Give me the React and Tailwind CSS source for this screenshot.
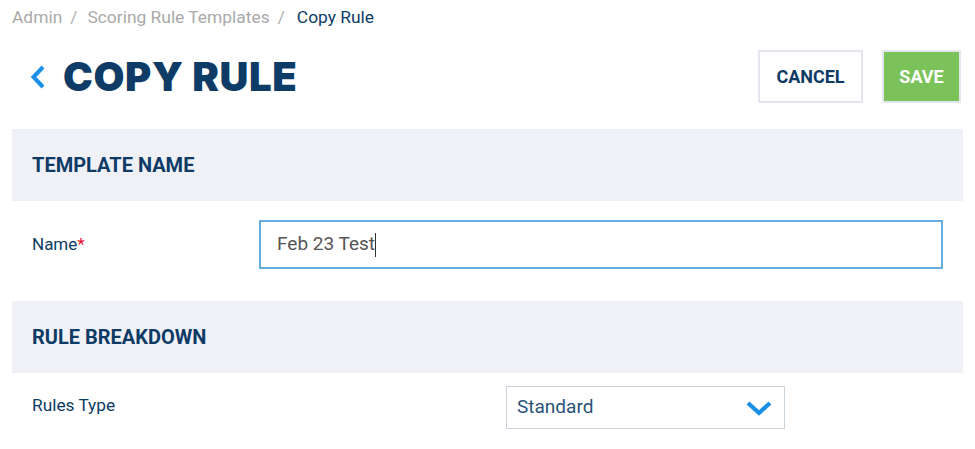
export default function App() {
  return (
    <div className="w-[975px] h-[449px] overflow-hidden bg-white px-3 font-['Roboto',sans-serif]">
      {/* breadcrumb */}
      <div className="h-[36px] flex items-center text-[17.4px] leading-none">
        <span className="text-[#a9a9a9]">Admin</span>
        <span className="text-[#b0b0b0] ml-[8px] mr-[10px]">/</span>
        <span className="text-[#a9a9a9]">Scoring Rule Templates</span>
        <span className="text-[#b0b0b0] ml-[8px] mr-[12px]">/</span>
        <span className="text-[#0d3b66]">Copy Rule</span>
      </div>

      {/* title row */}
      <div className="mt-[14px] h-[53px] flex items-center justify-between">
        <div className="flex items-center">
          <svg className="ml-[18px]" width="16" height="24" viewBox="0 0 16 24" fill="none">
            <polyline points="13,2 3.5,12 13,22" stroke="#1a8fe8" strokeWidth="4" strokeLinecap="butt" strokeLinejoin="miter" />
          </svg>
          <h1 className="ml-[17px] font-['Inter',sans-serif] font-black text-[40px] leading-none text-[#0e3c66] tracking-[0.015em]">
            COPY RULE
          </h1>
        </div>
        <div className="flex items-center gap-[19px] pr-[2px]">
          <button className="w-[105px] h-[53px] border-2 border-[#e3e6ef] bg-white text-[18px] font-bold text-[#0d3b66]">
            CANCEL
          </button>
          <button className="w-[79px] h-[53px] border-2 border-[#e3e6ef] bg-[#7bc25a] text-[18px] font-bold text-white">
            SAVE
          </button>
        </div>
      </div>

      {/* template name band */}
      <div className="mt-[26px] h-[72px] bg-[#f0f1f6] px-5 flex items-center">
        <h2 className="text-[20px] font-bold text-[#0d3b66]">TEMPLATE NAME</h2>
      </div>

      <div className="pt-[19px] pb-[32px] flex items-center">
        <div className="w-[247px] pl-5 text-[17px] text-[#0d3b66]">
          Name<span className="text-[#e8112d]">*</span>
        </div>
        <div className="flex-1 mr-[20px] h-[49px] border-2 border-[#66ade3] flex items-center pl-[16px] text-[19px] text-[#555555]">
          <span>Feb 23 Test</span>
          <span className="inline-block w-px h-[24px] bg-[#333]"></span>
        </div>
      </div>

      {/* rule breakdown band */}
      <div className="h-[72px] bg-[#f0f1f6] px-5 flex items-center">
        <h2 className="text-[20px] font-bold text-[#0d3b66]">RULE BREAKDOWN</h2>
      </div>

      <div className="pt-[13px] flex items-center">
        <div className="w-[494px] pl-5 pb-[4px] text-[17.3px] text-[#0d3b66]">Rules Type</div>
        <div className="w-[279px] h-[43px] border border-[#cad2dc] flex items-center justify-between pl-[10px] pr-[12px]">
          <span className="text-[19px] text-[#2a527a]">Standard</span>
          <svg width="26" height="16" viewBox="0 0 26 16" fill="none">
            <polyline points="2,3 13,13 24,3" stroke="#1a8fe8" strokeWidth="4.2" />
          </svg>
        </div>
      </div>
    </div>
  );
}
